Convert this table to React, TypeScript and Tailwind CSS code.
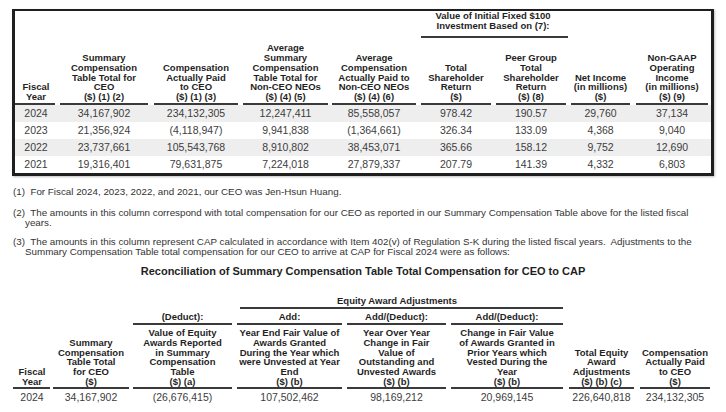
import React from 'react';

const Rule = ({ className = '' }: { className?: string }) => (
  <div className={`h-[2px] bg-[#3a3a3a] ${className}`} />
);

const topCols = [42, 94, 90, 89, 88, 76, 74, 65, 78];

const topHeaders: { lines: string[]; rule: string }[] = [
  { lines: ['Fiscal', 'Year'], rule: 'mr-[2px]' },
  { lines: ['Summary', 'Compensation', 'Table Total for', 'CEO', '($) (1) (2)'], rule: 'mx-[3px]' },
  { lines: ['Compensation', 'Actually Paid', 'to CEO', '($) (1) (3)'], rule: 'mx-[3px]' },
  { lines: ['Average', 'Summary', 'Compensation', 'Table Total for', 'Non-CEO NEOs', '($) (4) (5)'], rule: 'mx-[2px]' },
  { lines: ['Average', 'Compensation', 'Actually Paid to', 'Non-CEO NEOs', '($) (4) (6)'], rule: 'mx-[2px]' },
  { lines: ['Total', 'Shareholder', 'Return', '($)'], rule: 'mx-[3px]' },
  { lines: ['Peer Group', 'Total', 'Shareholder', 'Return', '($) (8)'], rule: 'mx-[2px]' },
  { lines: ['Net Income', '(in millions)', '($)'], rule: 'mx-[3px]' },
  { lines: ['Non-GAAP', 'Operating', 'Income', '(in millions)', '($) (9)'], rule: 'mx-[3px]' },
];

const topRows = [
  ['2024', '34,167,902', '234,132,305', '12,247,411', '85,558,057', '978.42', '190.57', '29,760', '37,134'],
  ['2023', '21,356,924', '(4,118,947)', '9,941,838', '(1,364,661)', '326.34', '133.09', '4,368', '9,040'],
  ['2022', '23,737,661', '105,543,768', '8,910,802', '38,453,071', '365.66', '158.12', '9,752', '12,690'],
  ['2021', '19,316,401', '79,631,875', '7,224,018', '27,879,337', '207.79', '141.39', '4,332', '6,803'],
];

const recCols = [38, 80, 103, 111, 103, 118, 71, 76];

const recHeaders: { lines: string[]; rule: string }[] = [
  { lines: ['Fiscal', 'Year'], rule: 'mr-[1px]' },
  { lines: ['Summary', 'Compensation', 'Table Total', 'for CEO', '($)'], rule: 'mx-[2px]' },
  { lines: ['Value of Equity', 'Awards Reported', 'in Summary', 'Compensation', 'Table', '($) (a)'], rule: 'mx-[2px]' },
  { lines: ['Year End Fair Value of', 'Awards Granted', 'During the Year which', 'were Unvested at Year', 'End', '($) (b)'], rule: 'mx-[3px]' },
  { lines: ['Year Over Year', 'Change in Fair', 'Value of', 'Outstanding and', 'Unvested Awards', '($) (b)'], rule: 'mx-[2px]' },
  { lines: ['Change in Fair Value', 'of Awards Granted in', 'Prior Years which', 'Vested During the', 'Year', '($) (b)'], rule: 'mx-[3px]' },
  { lines: ['Total Equity', 'Award', 'Adjustments', '($) (b) (c)'], rule: 'mx-[3px]' },
  { lines: ['Compensation', 'Actually Paid', 'to CEO', '($)'], rule: 'mx-[3px]' },
];

const recRow = ['2024', '34,167,902', '(26,676,415)', '107,502,462', '98,169,212', '20,969,145', '226,640,818', '234,132,305'];

const subHeads: (string | null)[] = [null, null, '(Deduct):', 'Add:', 'Add/(Deduct):', 'Add/(Deduct):', null, null];

function HeadText({ lines }: { lines: string[] }) {
  return (
    <div className="text-center font-bold text-[9.5px] leading-[9.8px] text-[#1f1f1f]">
      {lines.map((l, i) => (
        <div key={i} className="whitespace-nowrap">{l}</div>
      ))}
    </div>
  );
}

export default function App() {
  return (
    <div className="w-[726px] h-[412px] bg-white overflow-hidden font-['Liberation_Sans',Arial,sans-serif] text-[#333]">
      <div className="pt-[9px] pl-[12px]">
        <div className="w-[702px] border-[3px] border-t-[2px] border-[#1f1f1f] shadow-[1px_1px_2px_rgba(0,0,0,0.25)]">
          <table className="table-fixed border-collapse w-[696px]">
            <colgroup>
              {topCols.map((w, i) => (
                <col key={i} style={{ width: w }} />
              ))}
            </colgroup>
            <thead>
              <tr className="h-[28px]">
                <td colSpan={5} />
                <td colSpan={2} className="align-top p-0">
                  <div className="text-center font-bold text-[9.5px] leading-[10px] text-[#1f1f1f]">
                    <div>Value of Initial Fixed $100</div>
                    <div>Investment Based on (7):</div>
                  </div>
                  <Rule className="mt-[5px] ml-[3px]" />
                </td>
                <td colSpan={2} />
              </tr>
              <tr className="h-[66px]">
                {topHeaders.map((h, i) => (
                  <th key={i} className="align-bottom p-0 font-normal">
                    <HeadText lines={h.lines} />
                    <Rule className={`mt-[1px] ${h.rule}`} />
                  </th>
                ))}
              </tr>
            </thead>
            <tbody>
              {topRows.map((r, ri) => (
                <tr key={ri} className={`h-[17px] ${ri % 2 === 0 ? 'bg-[#eeeeee]' : 'bg-white'}`}>
                  {r.map((c, ci) => (
                    <td key={ci} className="p-0 text-center text-[10.5px] leading-[17px] text-[#3d3d3d]">
                      {c}
                    </td>
                  ))}
                </tr>
              ))}
            </tbody>
          </table>
        </div>
      </div>

      <div className="pl-[13px] pr-[12px] mt-[11px] text-[9.8px] leading-[10px] text-[#333]">
        <p>(1)&nbsp; For Fiscal 2024, 2023, 2022, and 2021, our CEO was Jen-Hsun Huang.</p>
        <p className="mt-[11px] pl-[12px] -indent-[12px]">
          (2)&nbsp; The amounts in this column correspond with total compensation for our CEO as reported in our Summary Compensation Table above for the listed fiscal years.
        </p>
        <p className="mt-[9px] pl-[12px] -indent-[12px]">
          (3)&nbsp; The amounts in this column represent CAP calculated in accordance with Item 402(v) of Regulation S-K during the listed fiscal years.&nbsp; Adjustments to the Summary Compensation Table total compensation for our CEO to arrive at CAP for Fiscal 2024 were as follows:
        </p>
      </div>

      <div className="mt-[8px] text-center font-bold text-[11px] leading-[13px] text-[#1f1f1f]">
        Reconciliation of Summary Compensation Table Total Compensation for CEO to CAP
      </div>

      <div className="pl-[13px] mt-[17px]">
        <table className="table-fixed border-collapse w-[700px]">
          <colgroup>
            {recCols.map((w, i) => (
              <col key={i} style={{ width: w }} />
            ))}
          </colgroup>
          <thead>
            <tr>
              <td colSpan={3} />
              <td colSpan={3} className="p-0">
                <div className="text-center font-bold text-[9.5px] leading-[11px] text-[#1f1f1f] pr-[6px]">Equity Award Adjustments</div>
                <Rule className="mt-[1px] ml-[6px] mr-[3px]" />
              </td>
              <td colSpan={2} />
            </tr>
            <tr>
              {subHeads.map((s, i) =>
                s ? (
                  <td key={i} className="p-0 pt-[2px]">
                    <div className="text-center font-bold text-[9.5px] leading-[11px] text-[#1f1f1f]">{s}</div>
                    <Rule className={`mt-[1px] ${recHeaders[i].rule}`} />
                  </td>
                ) : (
                  <td key={i} />
                )
              )}
            </tr>
            <tr>
              {recHeaders.map((h, i) => (
                <th key={i} className="align-bottom p-0 pt-[3px] font-normal">
                  <HeadText lines={h.lines} />
                  <Rule className={`mt-[0px] ${h.rule}`} />
                </th>
              ))}
            </tr>
          </thead>
          <tbody>
            <tr className="h-[16px]">
              {recRow.map((c, ci) => (
                <td key={ci} className="p-0 text-center text-[10.5px] leading-[16px] text-[#3d3d3d]">
                  {c}
                </td>
              ))}
            </tr>
          </tbody>
        </table>
      </div>
    </div>
  );
}
